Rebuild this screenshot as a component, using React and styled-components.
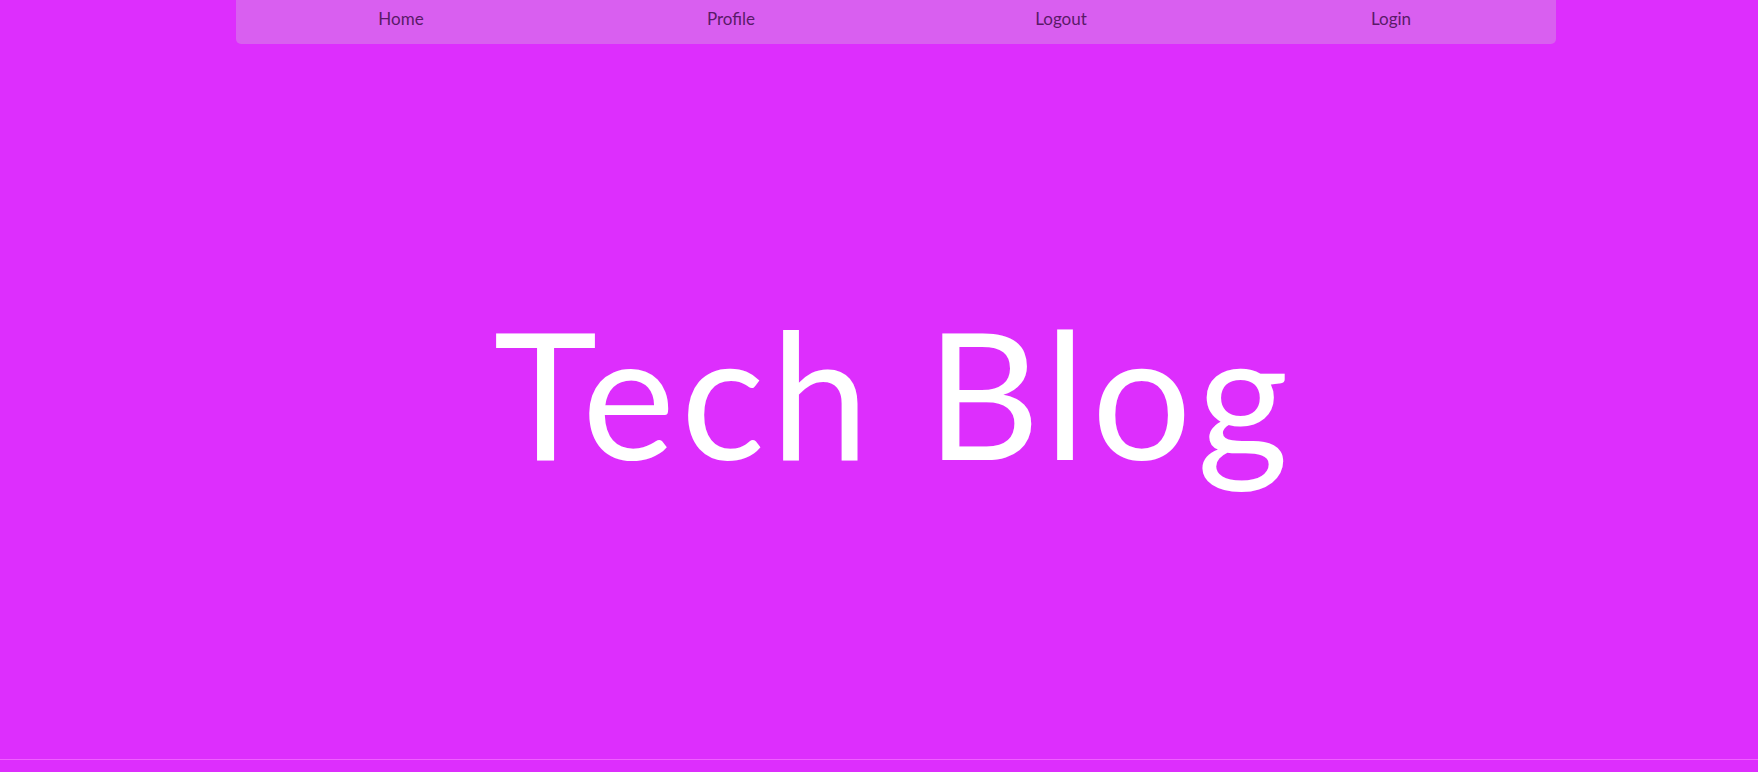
import React from 'react';
import styled, { createGlobalStyle } from 'styled-components';

const GlobalStyle = createGlobalStyle`
  html, body {
    margin: 0;
    padding: 0;
    background: #dd2efd;
    font-family: Lato, "Open Sans", sans-serif;
  }
`;

const Page = styled.div`
  min-height: 100vh;
  display: flex;
  flex-direction: column;
`;

const NavBar = styled.nav`
  width: 1320px;
  height: 44px;
  margin-left: 236px;
  display: grid;
  grid-template-columns: repeat(4, 1fr);
  background: #d95ff0;
  border-radius: 0 0 5px 5px;
`;

const NavLink = styled.a`
  display: flex;
  justify-content: center;
  padding-top: 8px;
  font-size: 17px;
  color: #5a1a68;
  text-decoration: none;
  cursor: pointer;
`;

const Hero = styled.main`
  flex: 1;
  display: flex;
  align-items: center;
  justify-content: center;
  padding-left: 30px;
  padding-bottom: 20px;
`;

const Title = styled.h1`
  margin: 0;
  font-size: 176px;
  font-weight: 400;
  line-height: 1;
  color: #ffffff;
  letter-spacing: 6px;
`;

const Footer = styled.footer`
  height: 12px;
  border-top: 1px solid #f060ff;
`;

export default function App() {
  const links = ['Home', 'Profile', 'Logout', 'Login'];
  return (
    <Page>
      <GlobalStyle />
      <NavBar>
        {links.map((l) => (
          <NavLink key={l}>{l}</NavLink>
        ))}
      </NavBar>
      <Hero>
        <Title>Tech Blog</Title>
      </Hero>
      <Footer />
    </Page>
  );
}
